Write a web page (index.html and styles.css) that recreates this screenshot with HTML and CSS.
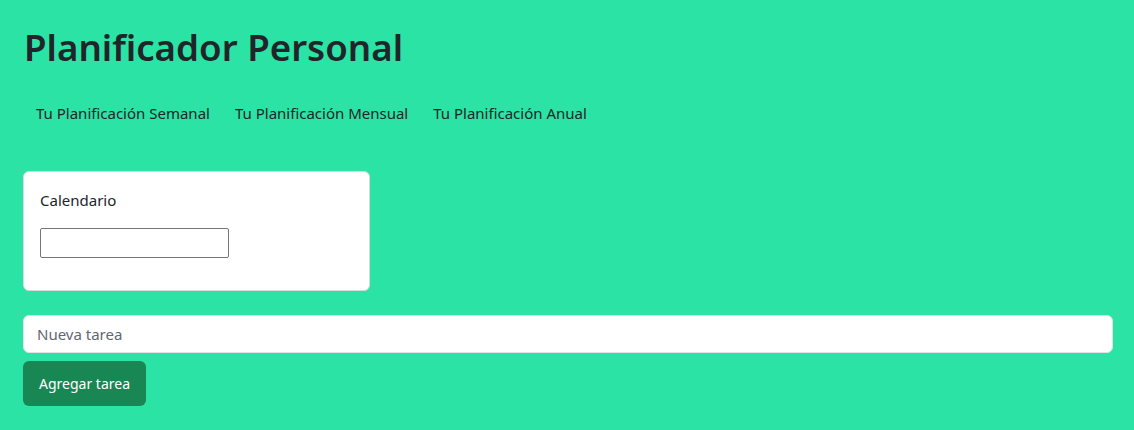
FILE: index.html
```html
<!DOCTYPE html>
<html lang="es">
<head>
<meta charset="utf-8">
<title>Planificador Personal</title>
<link rel="stylesheet" href="styles.css">
</head>
<body>
<div class="page">
  <h1 class="title">Planificador Personal</h1>
  <nav class="nav">
    <a class="nav-link" href="#">Tu Planificación Semanal</a>
    <a class="nav-link" href="#">Tu Planificación Mensual</a>
    <a class="nav-link" href="#">Tu Planificación Anual</a>
  </nav>
  <div class="card">
    <label class="card-label" for="cal">Calendario</label>
    <input class="cal-input" id="cal" type="text">
  </div>
  <input class="task-input" type="text" placeholder="Nueva tarea">
  <button class="btn" type="button">Agregar tarea</button>
</div>
</body>
</html>
```

FILE: styles.css
```css
html, body {
  margin: 0;
  padding: 0;
  background: #2be3a4;
  height: 100%;
}
body {
  font-family: "Noto Sans", "Open Sans", sans-serif;
  color: #212529;
  font-size: 16px;
}
.page {
  padding: 17px 21px 0 23px;
  display: flex;
  flex-direction: column;
  align-items: flex-start;
}
.title {
  margin: 2px 0 0;
  font-size: 36.7px;
  font-weight: 600;
  line-height: 56px;
  padding-left: 1px;
}
.nav {
  display: flex;
  margin-top: 26px;
}
.nav-link {
  color: #212529;
  text-decoration: none;
  padding: 0 12.5px;
  font-size: 15px;
  line-height: 24px;
}
.nav-link:first-child {
  padding-left: 13px;
}
.card {
  margin-top: 46px;
  width: 347px;
  box-sizing: border-box;
  height: 120px;
  background: #fff;
  border: 1px solid #d6dad9;
  border-radius: 6px;
  padding: 16px 16px;
  display: flex;
  flex-direction: column;
  align-items: flex-start;
}
.card-label {
  font-size: 15px;
  line-height: 24px;
}
.cal-input {
  margin-top: 16px;
  width: 189px;
  height: 30px;
  box-sizing: border-box;
  border: 1px solid #767676;
  border-radius: 2px;
  padding: 2px 4px;
  font: inherit;
}
.task-input {
  margin-top: 24px;
  align-self: stretch;
  height: 38px;
  box-sizing: border-box;
  border: 1px solid #dee2e6;
  border-radius: 6px;
  padding: 6px 13px;
  font: inherit;
  font-size: 15px;
  color: #212529;
  background: #fff;
}
.task-input::placeholder {
  color: #5f6771;
}
.btn {
  margin-top: 8px;
  width: 123px;
  height: 45px;
  background: #198754;
  color: #fff;
  border: none;
  border-radius: 6px;
  font-family: inherit;
  font-size: 14px;
  padding: 0;
  cursor: pointer;
}
```
